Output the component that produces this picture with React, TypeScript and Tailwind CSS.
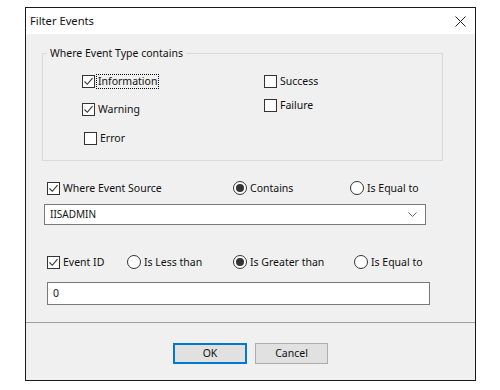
import React from "react";

const font = { fontFamily: '"Noto Sans", "Open Sans", sans-serif' };

function Check({ checked }: { checked: boolean }) {
  return (
    <span className="w-[13px] h-[13px] border border-[#333333] bg-white flex items-center justify-center shrink-0">
      {checked && (
        <svg width="11" height="11" viewBox="0 0 11 11">
          <path d="M1.5 5.5 L4.3 8.3 L9.5 2.2" fill="none" stroke="#333333" strokeWidth="1.1" />
        </svg>
      )}
    </span>
  );
}

function Radio({ checked }: { checked: boolean }) {
  return (
    <span className="w-[14px] h-[14px] rounded-full border border-[#333333] bg-white flex items-center justify-center shrink-0">
      {checked && <span className="w-[8px] h-[8px] rounded-full bg-[#333333]" />}
    </span>
  );
}

function CheckItem({ label, checked, focus }: { label: string; checked: boolean; focus?: boolean }) {
  return (
    <div className="flex items-center h-[16px]">
      <Check checked={checked} />
      <span
        className={
          focus
            ? "ml-[2px] px-[1px] leading-[13px] outline outline-1 outline-dotted outline-black"
            : "ml-[3px] leading-[13px]"
        }
      >
        {label}
      </span>
    </div>
  );
}

function RadioItem({ label, checked }: { label: string; checked: boolean }) {
  return (
    <div className="flex items-center h-[16px]">
      <Radio checked={checked} />
      <span className="ml-[3px] leading-[13px]">{label}</span>
    </div>
  );
}

export default function App() {
  return (
    <div className="w-[500px] h-[390px] bg-white pt-[7px] pl-[25px] text-[10.5px] text-[#111]" style={font}>
      <div className="w-[451px] h-[374px] border border-[#1a1a1a] flex flex-col">
        <div className="h-[26px] bg-white flex items-center justify-between pl-[4px] pr-[9px] shrink-0">
          <span className="text-[11.2px]">Filter Events</span>
          <svg width="11" height="11" viewBox="0 0 11 11">
            <path d="M0.5 0.5 L10.5 10.5 M10.5 0.5 L0.5 10.5" stroke="#222" strokeWidth="1" />
          </svg>
        </div>
        <div className="bg-[#f0f0f0] flex flex-col flex-1">
          <fieldset className="ml-[16px] mt-[12px] w-[401px] h-[115px] border border-[#d9d9d9] p-0 m-0">
            <legend className="ml-[4px] px-[3px] leading-[14px]">Where Event Type contains</legend>
            <div className="flex">
              <div className="ml-[39px] w-[182px] mt-[13px] flex flex-col gap-[12px]">
                <CheckItem label="Information" checked focus />
                <CheckItem label="Warning" checked />
                <div className="ml-[2px] mt-[1px]">
                  <CheckItem label="Error" checked={false} />
                </div>
              </div>
              <div className="mt-[13px] flex flex-col gap-[8px]">
                <CheckItem label="Success" checked={false} />
                <CheckItem label="Failure" checked={false} />
              </div>
            </div>
          </fieldset>

          <div className="flex ml-[21px] mt-[19px]">
            <div className="w-[186px]">
              <CheckItem label="Where Event Source" checked />
            </div>
            <div className="w-[117px]">
              <RadioItem label="Contains" checked />
            </div>
            <RadioItem label="Is Equal to" checked={false} />
          </div>

          <div className="ml-[18px] mt-[8px] w-[382px] h-[21px] bg-white border border-[#7a7a7a] flex items-center justify-between pl-[5px] pr-[8px]">
            <span className="text-[10px]">IISADMIN</span>
            <svg width="9" height="6" viewBox="0 0 9 6">
              <path d="M0.5 0.5 L4.5 4.5 L8.5 0.5" fill="none" stroke="#606060" strokeWidth="1" />
            </svg>
          </div>

          <div className="flex ml-[21px] mt-[29px]">
            <div className="w-[80px]">
              <CheckItem label="Event ID" checked />
            </div>
            <div className="w-[106px]">
              <RadioItem label="Is Less than" checked={false} />
            </div>
            <div className="w-[121px]">
              <RadioItem label="Is Greater than" checked />
            </div>
            <RadioItem label="Is Equal to" checked={false} />
          </div>

          <div className="ml-[21px] mt-[12px] w-[383px] h-[23px] bg-white border border-[#7a7a7a] flex items-center pl-[5px]">
            <span>0</span>
          </div>

          <div className="mt-[17px] h-px bg-[#a0a0a0]" />

          <div className="flex-1 flex justify-center items-start pt-[20px] gap-[8px]">
            <button className="w-[74px] h-[21px] bg-[#e1e1e1] border-2 border-[#0078d7] leading-none">OK</button>
            <button className="w-[73px] h-[21px] bg-[#e1e1e1] border border-[#adadad] leading-none">Cancel</button>
          </div>
        </div>
      </div>
    </div>
  );
}
